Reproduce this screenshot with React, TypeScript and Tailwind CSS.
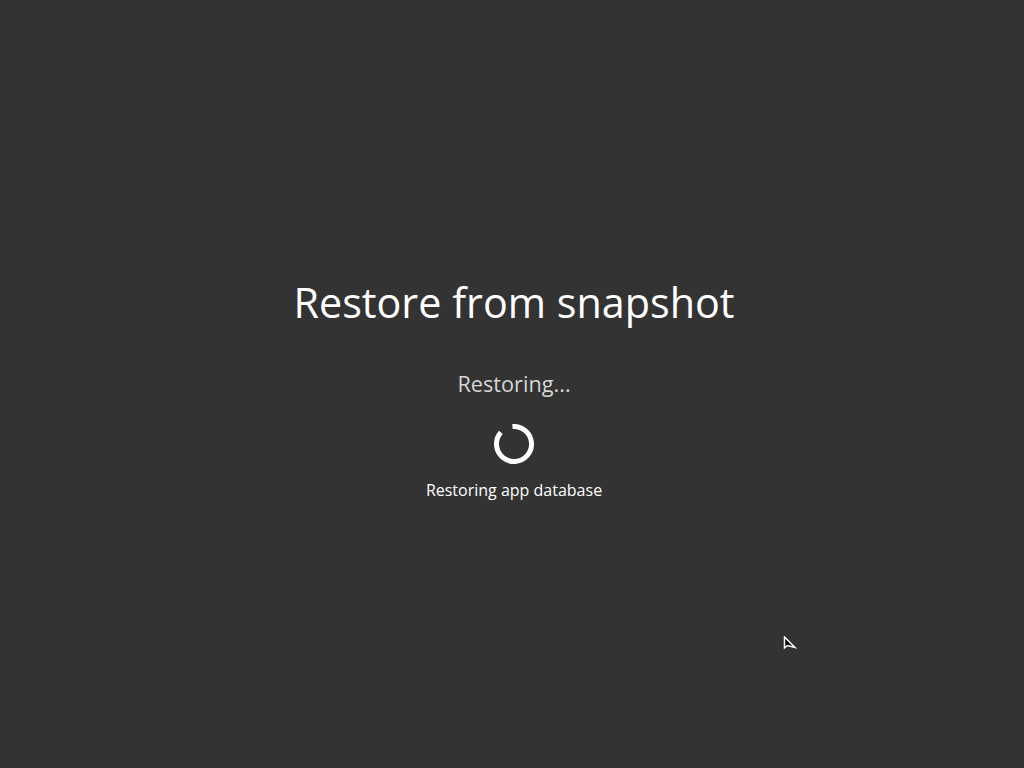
import React from "react";

const Spinner: React.FC = () => (
  <svg width="42" height="42" viewBox="0 0 42 42" fill="none">
    <circle
      cx="21"
      cy="21"
      r="17.5"
      stroke="#ffffff"
      strokeWidth="5"
      strokeDasharray="96 14"
      transform="rotate(-95 21 21)"
    />
  </svg>
);

export default function App() {
  return (
    <div
      className="relative w-full h-[768px] bg-[#333333] flex flex-col items-center pt-[276px] pl-[4px]"
      style={{ fontFamily: '"Open Sans", "Noto Sans", sans-serif' }}
    >
      {/* Title */}
      <h1 className="text-[41.3px] leading-[52px] text-white">Restore from snapshot</h1>

      {/* Status */}
      <p className="mt-[41px] text-[21.7px] leading-[30px] text-[#d6d6d6]">Restoring...</p>

      <div className="mt-[24px]">
        <Spinner />
      </div>

      <p className="mt-[14px] text-[16px] leading-[22px] font-medium text-white">
        Restoring app database
      </p>

      {/* Mouse cursor */}
      <svg className="absolute left-[783px] top-[636px]" width="14" height="16" viewBox="0 0 14 16">
        <path d="M1.5 1 L1.5 12 L4.5 9.5 L12 11.5 Z" fill="#000" stroke="#fff" strokeWidth="1.5" />
      </svg>
    </div>
  );
}
